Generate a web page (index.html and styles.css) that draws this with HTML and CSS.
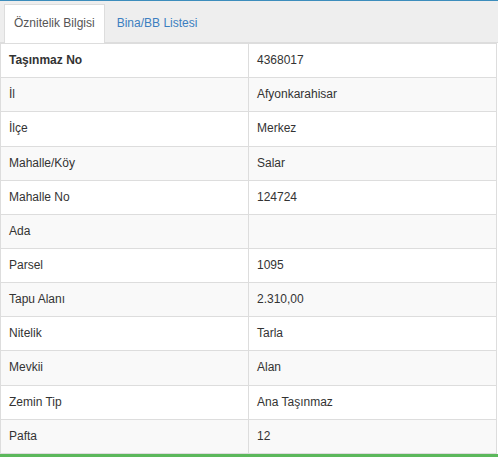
FILE: index.html
```html
<!DOCTYPE html>
<html>
<head>
<meta charset="utf-8">
<link rel="stylesheet" href="styles.css">
</head>
<body>
<div class="box">
  <ul class="tabs">
    <li class="tab active">Öznitelik Bilgisi</li>
    <li class="tab">Bina/BB Listesi</li>
  </ul>
  <table class="grid">
    <tbody>
      <tr><th>Taşınmaz No</th><td>4368017</td></tr>
      <tr><td>İl</td><td>Afyonkarahisar</td></tr>
      <tr><td>İlçe</td><td>Merkez</td></tr>
      <tr><td>Mahalle/Köy</td><td>Salar</td></tr>
      <tr><td>Mahalle No</td><td>124724</td></tr>
      <tr><td>Ada</td><td></td></tr>
      <tr><td>Parsel</td><td>1095</td></tr>
      <tr><td>Tapu Alanı</td><td>2.310,00</td></tr>
      <tr><td>Nitelik</td><td>Tarla</td></tr>
      <tr><td>Mevkii</td><td>Alan</td></tr>
      <tr><td>Zemin Tip</td><td>Ana Taşınmaz</td></tr>
      <tr><td>Pafta</td><td>12</td></tr>
    </tbody>
  </table>
  <div class="footer-bar"></div>
</div>
</body>
</html>
```

FILE: styles.css
```css
html, body {
  margin: 0;
  padding: 0;
  background: #fff;
}
body {
  font-family: "Liberation Sans", Arial, sans-serif;
  font-size: 12px;
  line-height: 1.42857;
  color: #333;
}
.box {
  width: 498px;
  border-top: 1px solid #3c8dbc;
}
.tabs {
  list-style: none;
  margin: 0;
  padding: 3px 0 0 4px;
  background: #eee;
  display: flex;
  border-bottom: 1px solid #ddd;
}
.tab {
  padding: 10px 9px 10px 9px;
  margin-right: 2px;
  margin-bottom: -1px;
  border: 1px solid transparent;
  border-bottom: none;
  color: #3c7fc0;
}
.tab.active {
  background: #fff;
  color: #555;
  border-color: #ddd;
  padding-bottom: 11px;
}
.grid {
  width: 497px;
  border-collapse: collapse;
  table-layout: fixed;
  border: 1px solid #ddd;
}
.grid th, .grid td {
  width: 50%;
  text-align: left;
  padding: 8px;
  border: 1px solid #ddd;
  height: 17px;
  vertical-align: top;
}
.grid th {
  font-weight: bold;
}
.grid tr:nth-child(even) {
  background: #f9f9f9;
}
.footer-bar {
  height: 6px;
  background: #5cb85c;
}
```
